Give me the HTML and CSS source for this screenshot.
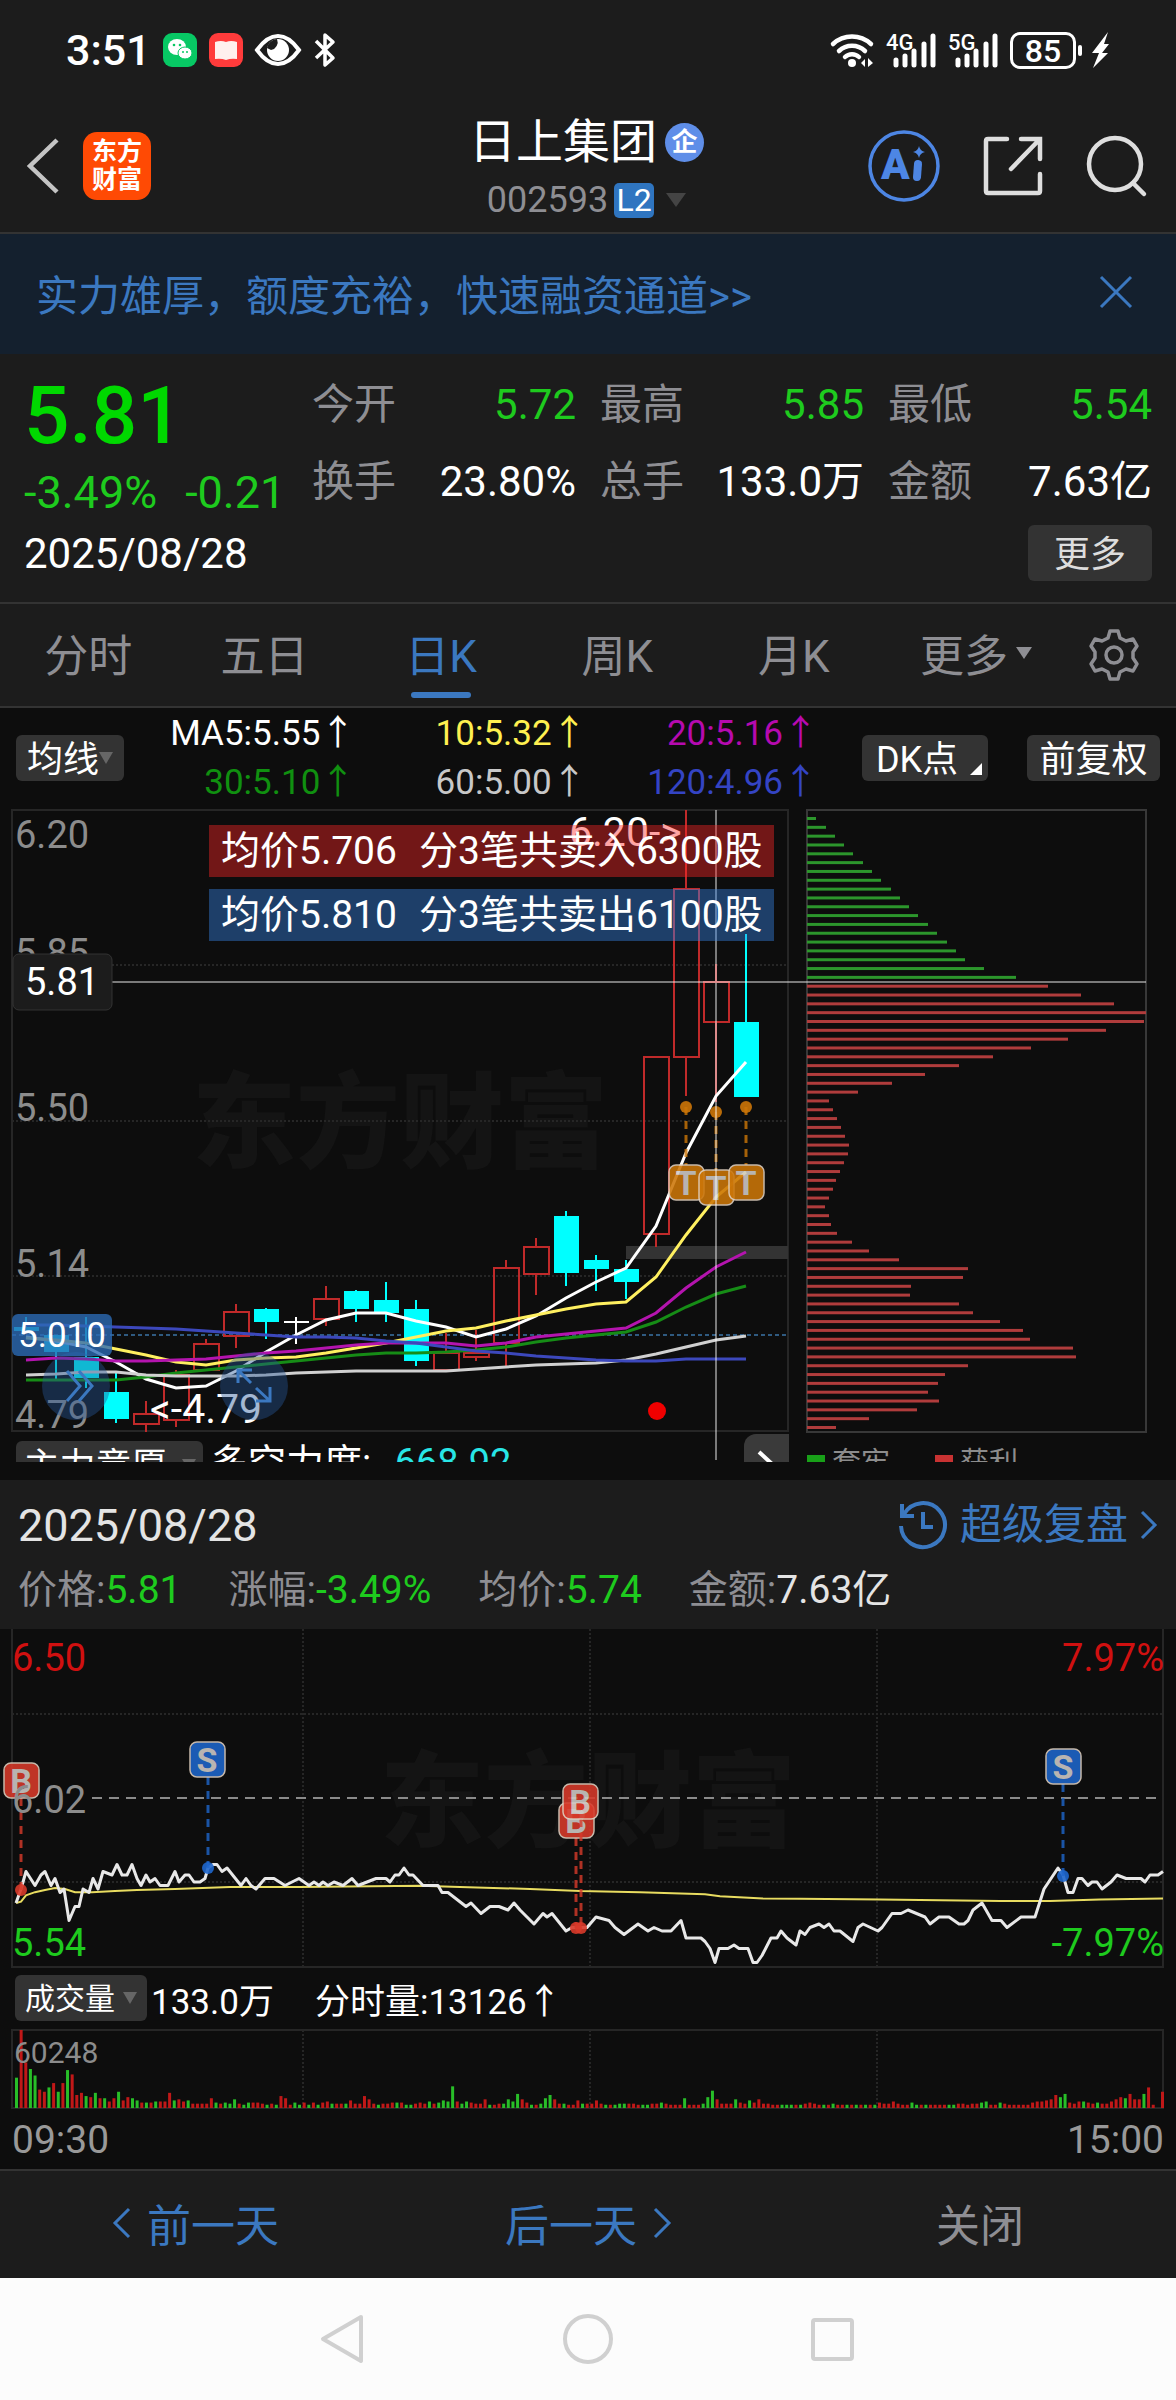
FILE: index.html
```html
<!DOCTYPE html>
<html lang="zh-CN">
<head>
  <meta charset="UTF-8" />
  <title>日上集团 002593</title>
  <meta name="viewport" content="width=device-width, initial-scale=1.0"/>
  <link rel="stylesheet" href="styles.css">
</head>
<body>

  <!-- Phone status bar -->
  <div class="status-bar">
    <div class="status-left">
      <span class="clock">3:51</span>
      <svg class="app-dot" viewBox="0 0 34 34"><rect width="34" height="34" rx="9" fill="#07c864"/><ellipse cx="14" cy="14" rx="9" ry="8" fill="#fff"/><ellipse cx="22" cy="20" rx="7" ry="6" fill="#fff" stroke="#07c864"/><g fill="#07c864"><circle cx="11" cy="12" r="1.3"/><circle cx="17" cy="12" r="1.3"/><circle cx="20" cy="19" r="1"/><circle cx="24" cy="19" r="1"/></g></svg>
      <svg class="app-dot" viewBox="0 0 34 34"><rect width="34" height="34" rx="9" fill="#ff3b3b"/><path d="M6 9q6-2 11 0q5-2 11 0v17q-6-1-11 1q-5-2-11-1z" fill="#fff0ee"/></svg>
      <svg class="eye" viewBox="0 0 46 34"><path d="M2 17Q12 3 23 3T44 17Q34 31 23 31T2 17z" fill="none" stroke="#fff" stroke-width="4"/><circle cx="23" cy="17" r="11" fill="#fff"/><path d="M22 6a8 8 0 0 1-6 11l-4-2a11 11 0 0 1 10-9z" fill="#1c1c1c"/></svg>
      <svg class="bluetooth" viewBox="0 0 24 36"><path d="M3 9l17 17-8 7V3l8 7L3 26" fill="none" stroke="#fff" stroke-width="3.5" stroke-linejoin="round"/></svg>
    </div>
    <div class="status-right">
      <svg class="wifi" viewBox="0 0 44 36"><g fill="none" stroke="#fff" stroke-width="4.5" stroke-linecap="round"><path d="M3 12a28 28 0 0 1 38 0"/><path d="M9 19a19 19 0 0 1 26 0"/><path d="M15 25a10 10 0 0 1 14 0"/></g><circle cx="22" cy="31" r="4" fill="#fff"/><path d="M31 31l4-4v8zM38 26l5 5-5 4z" fill="#fff"/></svg>
      <svg class="signal" viewBox="0 0 50 36"><text class="net" x="0" y="18">4G</text><path d="M10 33v-5M19 33v-9M28 33V19M38 33V12M47 33V4" stroke="#fff" stroke-width="5" stroke-linecap="round"/></svg>
      <svg class="signal" viewBox="0 0 50 36"><text class="net" x="0" y="18">5G</text><path d="M10 33v-5M19 33v-9M28 33V19M38 33V12M47 33V4" stroke="#fff" stroke-width="5" stroke-linecap="round"/></svg>
      <span class="battery">85</span>
      <svg class="bolt" viewBox="0 0 18 36"><path d="M16 0L0 21h7L1 36l15-15h-6l7-9h-5z" fill="#fff"/></svg>
    </div>
  </div>

  <!-- Title bar -->
  <header class="title-bar">
    <div class="title-side">
      <button class="icon-btn" aria-label="返回"><svg class="icon-back" viewBox="0 0 32 56"><path d="M30 2L3 28l27 26" fill="none" stroke="#c4c4c4" stroke-width="4.5"/></svg></button>
      <a class="brand" href="#">东方<br>财富</a>
    </div>
    <div class="title-main">
      <h1>日上集团<span class="corp">企</span></h1>
      <p>002593<span class="level">L2</span><i class="caret"></i></p>
    </div>
    <div class="title-side title-actions">
      <button class="icon-btn" aria-label="AI"><svg class="icon-ai" viewBox="0 0 72 72"><circle cx="36" cy="36" r="34" fill="none" stroke="#4d86e4" stroke-width="3.5"/><text x="13" y="49">A</text><path d="M50 34l-1 13" stroke="#4d86e4" stroke-width="8" stroke-linecap="round"/><path d="M51 16q1 5 6 6q-5 1-6 6q-1-5-6-6q5-1 6-6z" fill="#4d86e4"/></svg></button>
      <button class="icon-btn" aria-label="分享"><svg class="icon-nav" viewBox="0 0 60 60"><g fill="none" stroke="#dedede" stroke-width="4.5" stroke-linecap="round"><path d="M24 3H5q-2 0-2 2v50q0 2 2 2h50q2 0 2-2V38"/><path d="M38 3h19v20M56 4L28 33"/></g></svg></button>
      <button class="icon-btn" aria-label="搜索"><svg class="icon-nav" viewBox="0 0 60 60"><g fill="none" stroke="#dedede" stroke-width="4.5" stroke-linecap="round"><circle cx="29" cy="28" r="26"/><path d="M47 47l11 11"/></g></svg></button>
    </div>
  </header>

  <!-- Ad banner -->
  <div class="banner">
    <a href="#">实力雄厚，额度充裕，快速融资通道&gt;&gt;</a>
    <button class="icon-btn" aria-label="关闭广告"><svg class="icon-close" viewBox="0 0 32 32"><path d="M1 1l30 30M31 1L1 31" stroke="#3b78c0" stroke-width="3"/></svg></button>
  </div>

  <!-- Quote -->
  <section class="quote">
    <div class="quote-top">
      <div class="price">
        <strong>5.81</strong>
        <p><span>-3.49%</span><span>-0.21</span></p>
      </div>
      <dl class="stats">
        <div><dt>今开</dt><dd class="down">5.72</dd></div>
        <div><dt>最高</dt><dd class="down">5.85</dd></div>
        <div><dt>最低</dt><dd class="down">5.54</dd></div>
        <div><dt>换手</dt><dd>23.80%</dd></div>
        <div><dt>总手</dt><dd>133.0万</dd></div>
        <div><dt>金额</dt><dd>7.63亿</dd></div>
      </dl>
    </div>
    <div class="quote-date">
      <span>2025/08/28</span>
      <button class="chip more">更多</button>
    </div>
  </section>

  <!-- Period tabs -->
  <nav class="tabs">
    <button>分时</button>
    <button>五日</button>
    <button class="active">日K</button>
    <button>周K</button>
    <button>月K</button>
    <button class="tab-more">更多<i class="caret small"></i></button>
    <button class="gear" aria-label="设置"><svg viewBox="0 0 52 52"><g fill="none" stroke="#8e8e93" stroke-width="3.5" stroke-linejoin="round"><path d="M22 2h8l2 7 6 3 7-2 4 7-4 6v6l4 6-4 7-7-2-6 3-2 7h-8l-2-7-6-3-7 2-4-7 4-6v-6l-4-6 4-7 7 2 6-3z"/><circle cx="26" cy="26" r="8"/></g></svg></button>
  </nav>

  <!-- Daily K chart -->
  <section class="kline">
    <div class="ma-row">
      <button class="chip ma-chip">均线<i class="caret tiny"></i></button>
      <div class="ma-list">
        <span class="ma5">MA5:5.55↑</span>
        <span class="ma10">10:5.32↑</span>
        <span class="ma20">20:5.16↑</span>
        <span class="ma30">30:5.10↑</span>
        <span class="ma60">60:5.00↑</span>
        <span class="ma120">120:4.96↑</span>
      </div>
      <button class="chip dk">DK点<i class="corner"></i></button>
      <button class="chip adjust">前复权</button>
    </div>

    <svg class="chart" viewBox="0 806 1176 628">
      <text class="watermark" x="192" y="1160">东方财富</text>
      <g class="grid">
        <path d="M12 965H788M12 1121H788M12 1276H788" stroke-dasharray="2 2"/>
        <rect x="12" y="810" width="776" height="621"/>
      </g>
      <rect class="profile-frame" x="807" y="810" width="339" height="622"/>
      <rect x="626" y="1246" width="162" height="13" fill="#333"/>
      <path d="M12 1335H789" stroke="#2f5a80" stroke-width="2" stroke-dasharray="4 3"/>
      <g class="axis">
        <text x="15" y="848">6.20</text>
        <text x="15" y="966">5.85</text>
        <text x="15" y="1121">5.50</text>
        <text x="15" y="1277">5.14</text>
        <text x="15" y="1428">4.79</text>
      </g>
      <g id="candles"></g>
      <g class="note">
        <text x="569" y="846">6.20-&gt;</text>
        <text x="150" y="1423">&lt;-4.79</text>
      </g>
      <g id="profile"></g>
      <g id="maLines" class="ma-lines"></g>
      <circle cx="657" cy="1411" r="9" fill="#f00000"/>
      <g id="tMarks"></g>
      <g class="float-btn">
        <circle cx="76" cy="1386" r="34"/>
        <path d="M67 1371l13 15-13 15M79 1371l13 15-13 15"/>
        <circle cx="254" cy="1386" r="34"/>
        <path d="M252 1370h-14v13M238 1370l13 13M256 1401h14v-14M270 1401l-14-13"/>
      </g>
      <path class="cross" d="M28 982H1146M716 810V1460"/>
      <g class="deal">
        <rect x="209" y="825" width="565" height="52" fill="rgba(255,38,38,.42)"/>
        <text x="221" y="864">均价5.706</text>
        <text x="419" y="864">分3笔共卖入6300股</text>
        <rect x="209" y="889" width="565" height="52" fill="rgba(56,134,234,.42)"/>
        <text x="221" y="928">均价5.810</text>
        <text x="419" y="928">分3笔共卖出6100股</text>
      </g>
      <rect x="13" y="954" width="99" height="56" rx="6" fill="#1c1c1c" stroke="#333"/>
      <text class="tag" x="25" y="995">5.81</text>
      <rect x="12" y="1314" width="100" height="42" rx="6" fill="rgba(44,106,180,.8)"/>
      <text class="tag cost" x="18" y="1347">5.010</text>
    </svg>

    <!-- Sub indicator, cut off by the panel below -->
    <div class="sub-row">
      <button class="chip sub-chip">主力意愿<i class="caret tiny"></i></button>
      <span class="power">多空力度: <b>668.92</b></span>
      <button class="next" aria-label="下一个"><svg viewBox="0 0 24 24"><path d="M5 2l12 11L5 24" fill="none" stroke="#fff" stroke-width="4"/></svg></button>
      <span class="legend"><i class="lock"></i>套牢</span>
      <span class="legend"><i class="gain"></i>获利</span>
    </div>
  </section>

  <!-- Selected day -->
  <section class="day-info">
    <div class="day-head">
      <h2>2025/08/28</h2>
      <a href="#">
        <svg class="icon-replay" viewBox="0 0 50 50"><g fill="none" stroke="#3b78c0" stroke-width="4"><path d="M6 14a22 22 0 1 1-3 12"/><path d="M4 4v12h12M25 12v15h10"/></g></svg>
        超级复盘
        <svg class="icon-arrow" viewBox="0 0 18 30"><path d="M2 2l13 13L2 28" fill="none" stroke="#3b78c0" stroke-width="3"/></svg>
      </a>
    </div>
    <ul>
      <li>价格:<b class="down">5.81</b></li>
      <li>涨幅:<b class="down">-3.49%</b></li>
      <li>均价:<b class="down">5.74</b></li>
      <li>金额:<b>7.63亿</b></li>
    </ul>
  </section>

  <!-- Minute chart -->
  <section class="minute">
    <svg class="chart" viewBox="0 1629 1176 342">
      <text class="watermark" x="380" y="1839">东方财富</text>
      <g class="grid">
        <path d="M12 1714H1163M12 1882H1163M303 1629V1967M590 1629V1967M877 1629V1967" stroke-dasharray="2 2"/>
        <path d="M12 1629V1967H1163V1629"/>
      </g>
      <path d="M92 1798H1163" stroke="#8a8a8a" stroke-width="2" stroke-dasharray="10 7"/>
      <path id="avgLine" class="avg-line"/>
      <path id="priceLine" class="price-line"/>
      <g id="trades"></g>
      <g class="axis">
        <text class="red" x="12" y="1671">6.50</text>
        <text x="12" y="1813">6.02</text>
        <text class="green" x="12" y="1956">5.54</text>
        <text class="red end" x="1164" y="1671">7.97%</text>
        <text class="green end" x="1164" y="1956">-7.97%</text>
      </g>
    </svg>
    <div class="vol-row">
      <button class="chip vol-chip">成交量<i class="caret tiny"></i></button>
      <span>133.0万</span>
      <span class="vol-now">分时量:13126↑</span>
    </div>
    <svg class="chart" viewBox="0 2025 1176 85">
      <g class="grid">
        <path d="M303 2030V2108M590 2030V2108M877 2030V2108" stroke-dasharray="2 2"/>
        <rect x="12" y="2030" width="1151" height="78"/>
      </g>
      <g id="volume"></g>
      <text class="vol-max" x="14" y="2063">60248</text>
    </svg>
    <div class="times"><span>09:30</span><span>15:00</span></div>
  </section>

  <!-- Day switch -->
  <footer class="day-switch">
    <button><svg class="icon-arrow" viewBox="0 0 18 30"><path d="M16 1L2 15l14 14" fill="none" stroke="#3b78c0" stroke-width="3"/></svg>前一天</button>
    <button>后一天<svg class="icon-arrow" viewBox="0 0 18 30"><path d="M2 1l14 14L2 29" fill="none" stroke="#3b78c0" stroke-width="3"/></svg></button>
    <button class="close">关闭</button>
  </footer>

  <!-- System keys -->
  <div class="sys-keys">
    <button class="icon-btn" aria-label="返回"><svg viewBox="0 0 50 50"><path d="M43 3L5 25l38 22z" fill="none" stroke="#d0d0d0" stroke-width="4" stroke-linejoin="round"/></svg></button>
    <button class="icon-btn" aria-label="主页"><svg viewBox="0 0 50 50"><circle cx="25" cy="25" r="23" fill="none" stroke="#d0d0d0" stroke-width="4"/></svg></button>
    <button class="icon-btn" aria-label="最近"><svg viewBox="0 0 50 50"><rect x="5" y="6" width="39" height="39" rx="2" fill="none" stroke="#d0d0d0" stroke-width="4"/></svg></button>
  </div>

  <script src="script.js"></script>
</body>
</html>
```
FILE: styles.css
```css
* { margin: 0; padding: 0; box-sizing: border-box; }
body { font-family: Roboto, "Noto Sans CJK SC", sans-serif; background: #1c1c1c; color: #fff; }
button { background: none; border: none; color: inherit; font-family: inherit; font-size: inherit; cursor: pointer; }
a { color: #3b78c0; text-decoration: none; }
svg { display: block; flex: none; overflow: visible; }
b, h1, h2 { font-weight: 400; }
.down { color: #1ecb1e; }

.icon-btn { display: flex; }
.caret { display: inline-block; border: 10px solid transparent; border-top: 14px solid #444; border-bottom: 0; }
.caret.small { border-width: 12px 8px 0; border-top-color: #8e8e93; margin-left: 8px; }
.caret.tiny { border-width: 12px 7px 0; border-top-color: #666; margin-top: 4px; }
.chip { display: flex; align-items: center; justify-content: center; background: #333; border-radius: 6px; height: 46px; padding-bottom: 4px; font-size: 36px; }

/* status bar */
.status-bar { display: flex; justify-content: space-between; align-items: center; height: 100px; padding: 0 66px; }
.status-left, .status-right { display: flex; align-items: center; gap: 12px; }
.clock { font-size: 43px; font-weight: 500; }
.app-dot { width: 34px; height: 34px; }
.eye { width: 46px; height: 34px; }
.bluetooth { width: 24px; height: 36px; }
.wifi { width: 44px; height: 36px; }
.signal { width: 50px; height: 36px; }
.net { font-size: 22px; font-weight: 500; fill: #fff; }
.battery { position: relative; border: 3px solid #fff; border-radius: 10px; width: 66px; height: 37px; line-height: 32px; text-align: center; font-size: 32px; font-weight: 500; margin-right: 4px; }
.battery::after { content: ""; position: absolute; left: 65px; top: 10px; width: 4px; height: 11px; border-radius: 2px; background: #fff; }
.bolt { width: 18px; height: 36px; }

/* title bar */
.title-bar { display: flex; align-items: center; height: 134px; padding: 0 30px 0 27px; border-bottom: 2px solid #333; }
.title-side { flex: 1; display: flex; align-items: center; gap: 24px; }
.title-actions { justify-content: flex-end; gap: 43px; }
.icon-back { width: 32px; height: 56px; }
.brand { background: #ff4a04; color: #fff; border-radius: 14px; width: 68px; height: 68px; padding: 6px 0; text-align: center; font-size: 25px; font-weight: 700; line-height: 28px; }
.title-main { text-align: center; padding-top: 8px; }
.title-main h1 { display: flex; align-items: center; justify-content: center; gap: 8px; font-size: 47px; line-height: 60px; }
.title-main p { display: flex; align-items: center; justify-content: center; color: #8e8e93; font-size: 36px; line-height: 56px; }
.corp { background: #5f8ee8; border-radius: 50%; width: 39px; height: 39px; line-height: 38px; font-size: 26px; font-weight: 700; }
.level { background: #2f75c0; color: #fff; border-radius: 5px; width: 40px; height: 35px; line-height: 35px; font-size: 32px; margin: 0 12px 0 6px; }
.icon-ai { width: 72px; height: 72px; }
.icon-ai text { font-size: 42px; font-weight: 900; fill: #4d86e4; }
.icon-nav { width: 60px; height: 60px; }

/* banner */
.banner { display: flex; justify-content: space-between; align-items: center; height: 120px; padding: 0 44px 4px 36px; background: #14202e; font-size: 42px; }
.icon-close { width: 32px; height: 32px; }

/* quote */
.quote { padding: 13px 24px 22px; height: 250px; border-bottom: 2px solid #333; }
.quote-top { display: flex; }
.price { width: 288px; color: #00d800; }
.price strong { display: block; font-size: 80px; font-weight: 500; line-height: 98px; }
.price p { display: flex; gap: 28px; font-size: 45px; line-height: 56px; color: #1ecb1e; }
.stats { flex: 1; display: grid; grid-template-columns: repeat(3, 1fr); column-gap: 24px; font-size: 42px; line-height: 75px; }
.stats div { display: flex; justify-content: space-between; }
.stats dt { color: #8e8e93; }
.quote-date { display: flex; justify-content: space-between; align-items: center; font-size: 42px; margin-top: 4px; }
.chip.more { width: 124px; height: 56px; color: #ddd; }

/* tabs */
.tabs { display: flex; height: 104px; border-bottom: 2px solid #333; color: #8e8e93; font-size: 44px; }
.tabs button { flex: 0 0 15%; display: flex; align-items: center; justify-content: center; padding-bottom: 4px; }
.tabs .active { color: #3b78c0; position: relative; }
.tabs .active::after { content: ""; position: absolute; bottom: 8px; width: 60px; height: 6px; border-radius: 3px; background: #3b78c0; }
.tabs .tab-more { flex: 1; }
.tabs .gear { flex: 0 0 106px; padding: 0 18px 0 0; }
.gear svg { width: 52px; height: 52px; }

/* daily K */
.kline { background: #0d0d0d; height: 772px; }
.ma-row { display: flex; align-items: center; height: 98px; padding: 2px 16px 0; }
.ma-row .chip { flex: none; }
.ma-row .ma-chip { width: 108px; }
.ma-row .dk { position: relative; width: 126px; margin: 0 39px 0 44px; padding-right: 16px; }
.ma-row .adjust { width: 133px; }
.corner { position: absolute; right: 6px; bottom: 6px; border-left: 12px solid transparent; border-bottom: 12px solid #fff; }
.ma-list { flex: 1; display: grid; grid-template-columns: repeat(3, 1fr); font-size: 35px; line-height: 49px; text-align: right; }
.ma5 { color: #fff; }
.ma10 { color: #fff050; }
.ma20 { color: #b60ab0; }
.ma30 { color: #109010; }
.ma60 { color: #c8c8c8; }
.ma120 { color: #3444c4; }

.chart { width: 100%; height: auto; }
.chart text { font-size: 38px; }
.chart .watermark { font-size: 104px; font-weight: 900; fill: #141414; }
.grid { fill: none; stroke: #262626; stroke-width: 2; }
.profile-frame { fill: none; stroke: #383838; stroke-width: 2; }
.axis { fill: #8c8c8c; }
.axis .red { fill: #d01010; }
.axis .green { fill: #1ecb1e; }
.axis .end { text-anchor: end; }
.note, .tag { fill: #fff; }
.chart .note text { font-size: 41px; }
.chart .cost { font-size: 35px; }
.cross { fill: none; stroke: rgba(255, 255, 255, .45); stroke-width: 2; }
.ma-lines path { fill: none; stroke-width: 3; }
.float-btn circle { fill: rgba(38, 86, 150, .42); }
.float-btn path { fill: none; stroke: #3b78c0; stroke-width: 3; }
.deal { fill: #fff; }
.chart .deal text { font-size: 39px; }
.chart .mark { font-size: 34px; font-weight: 700; text-anchor: middle; }

.sub-row { display: flex; height: 28px; overflow: hidden; padding: 0 16px; font-size: 36px; line-height: 44px; }
.sub-chip { width: 187px; height: 44px; margin-top: 7px; padding: 0; gap: 14px; flex: none; }
.power { margin: 7px auto 0 7px; font-size: 38px; }
.power b { color: #28e6e6; margin-left: 14px; }
.next { background: #3a3a3a; border-radius: 12px 0 0 0; width: 45px; height: 44px; padding: 16px 10px; margin-right: 18px; }
.next svg { width: 24px; height: 24px; }
.legend { color: #8c8c8c; width: 128px; font-size: 29px; margin-top: 7px; }
.legend i { display: inline-block; width: 18px; height: 18px; margin-right: 7px; }
.legend:last-child { margin-right: 97px; }
.lock { background: #18a018; }
.gain { background: #c83232; }

/* selected day */
.day-info { height: 149px; padding: 11px 18px 0; }
.day-head { display: flex; justify-content: space-between; align-items: center; height: 68px; }
.day-head h2 { font-size: 45px; color: #e4e4e4; }
.day-head a { display: flex; align-items: center; gap: 12px; font-size: 42px; line-height: 56px; }
.icon-replay { width: 50px; height: 50px; }
.icon-arrow { width: 18px; height: 30px; }
.day-info ul { display: flex; gap: 47px; list-style: none; font-size: 39px; line-height: 62px; color: #8e8e93; }
.day-info b { color: #e4e4e4; }
.day-info b.down { color: #1ecb1e; }

/* minute chart */
.minute { background: #0d0d0d; height: 540px; }
.avg-line { fill: none; stroke: #e8dc60; stroke-width: 2; }
.price-line { fill: none; stroke: #e8e8e8; stroke-width: 3; stroke-linejoin: round; }
.vol-row { display: flex; align-items: center; height: 54px; padding: 0 15px; font-size: 35px; }
.vol-chip { width: 132px; height: 46px; font-size: 30px; gap: 8px; margin-right: 4px; }
.vol-now { margin-left: 41px; }
.chart .vol-max { font-size: 30px; fill: #8c8c8c; }
.times { display: flex; justify-content: space-between; padding: 2px 12px; font-size: 39px; line-height: 56px; color: #999; }

/* day switch */
.day-switch { display: flex; height: 109px; border-top: 2px solid #333; color: #3b78c0; font-size: 44px; }
.day-switch button { flex: 1; display: flex; align-items: center; justify-content: center; gap: 16px; padding-bottom: 4px; }
.day-switch .close { color: #8e8e93; }

.sys-keys { display: flex; justify-content: center; align-items: center; gap: 195px; height: 122px; background: #fcfcfc; }
.sys-keys svg { width: 50px; height: 50px; }
```
FILE: script.js
```js
const $ = (id) => document.getElementById(id);

// colour, high, body top, body bottom, low
const candles = [
  ["c", 1317, 1327, 1331, 1331], ["c", 1335, 1335, 1352, 1379], ["c", 1317, 1357, 1378, 1388],
  ["c", 1372, 1392, 1419, 1423], ["r", 1401, 1414, 1424, 1432], ["r", 1370, 1375, 1420, 1427],
  ["r", 1339, 1344, 1370, 1370], ["r", 1304, 1312, 1336, 1348], ["c", 1308, 1309, 1322, 1339],
  ["w", 1317, 1321, 1323, 1344], ["r", 1286, 1299, 1319, 1326], ["c", 1290, 1291, 1309, 1322],
  ["c", 1282, 1300, 1313, 1322], ["c", 1300, 1309, 1361, 1366], ["r", 1333, 1353, 1370, 1370],
  ["r", 1330, 1353, 1357, 1361], ["r", 1260, 1268, 1343, 1366], ["r", 1238, 1247, 1274, 1295],
  ["c", 1211, 1216, 1273, 1286], ["c", 1255, 1260, 1269, 1291], ["c", 1260, 1269, 1282, 1299],
  ["r", 1057, 1057, 1234, 1247], ["r", 810, 889, 1057, 1096], ["r", 964, 982, 1022, 1102],
  ["c", 934, 1022, 1097, 1097]
];
const colors = { c: "#00ffff", r: "#c02a2a", w: "#ffffff" };

$("candles").innerHTML = candles.map(([k, high, top, bottom, low], i) => {
  const x = 26 + i * 30;
  const paint = k === "r" ? `fill="none" stroke="${colors[k]}" stroke-width="2"` : `fill="${colors[k]}"`;
  return `<path d="M${x} ${high}V${top}M${x} ${bottom}V${low}" stroke="${colors[k]}" stroke-width="2"/>
    <rect x="${x - 12}" y="${top}" width="25" height="${bottom - top}" ${paint}/>`;
}).join("");

const maLines = {
  "#fff": [1337,1341,1347,1362,1379,1388,1386,1371,1352,1335,1320,1313,1313,1321,1327,1337,1329,1316,1298,1282,1268,1226,1153,1096,1062],
  "#fff060": [1338,1340,1343,1349,1355,1362,1365,1360,1358,1357,1353,1348,1343,1337,1331,1328,1321,1315,1309,1304,1302,1277,1235,1197,1172],
  "#b414ae": [1360,1358,1359,1361,1361,1360,1359,1356,1353,1351,1348,1345,1343,1343,1343,1346,1343,1337,1334,1331,1328,1313,1288,1267,1252],
  "#168c16": [1380,1380,1380,1380,1377,1373,1370,1367,1364,1361,1358,1355,1353,1353,1352,1350,1347,1342,1338,1335,1332,1322,1307,1294,1286],
  "#d0d0d0": [1375,1374,1372,1372,1375,1376,1376,1376,1375,1373,1372,1371,1371,1371,1371,1369,1367,1365,1364,1363,1360,1354,1347,1340,1336],
  "#3c48bc": [1325,1325,1326,1327,1328,1329,1331,1333,1335,1337,1337,1338,1341,1343,1347,1351,1353,1356,1358,1360,1361,1361,1359,1359,1359]
};
$("maLines").innerHTML = Object.entries(maLines).map(([color, ys]) =>
  `<path stroke="${color}" d="M${ys.map((y, i) => `${26 + i * 30} ${y}`).join("L")}"/>`
).join("");

// cost distribution, the first 19 are locked-in positions
const profile = [9,19,28,37,46,56,65,74,84,93,102,111,121,130,140,149,158,177,209,
  241,274,307,339,337,299,261,224,186,152,118,85,51,22,26,30,34,38,42,41,37,33,29,26,22,18,22,24,30,45,62,92,
  161,156,104,103,152,166,193,216,223,266,269,161,138,131,121,132,110,62,29];
$("profile").innerHTML = profile.map((w, i) =>
  `<rect x="807" y="${817 + i * 609 / 69}" width="${w}" height="3" fill="${i < 19 ? "#2c962c" : "#b03c3c"}"/>`
).join("");

// badge centre x, badge top, dot x, dot y, letter, colour
function mark(x, top, dotX, dotY, letter, color, below) {
  const from = below ? dotY : top + 35;
  const to = below ? top : dotY;
  return `<path d="M${dotX} ${from}V${to}" stroke="${color}" stroke-width="3" stroke-dasharray="8 6" opacity=".8"/>
    <circle cx="${dotX}" cy="${dotY}" r="6" fill="${color}" opacity=".9"/>
    <g opacity=".88"><rect x="${x - 17}" y="${top}" width="35" height="35" rx="7" fill="${color}" stroke="#e0d0c0" stroke-width="1.5"/>
    <text class="mark" x="${x}" y="${top + 30}" fill="#d0ccc8">${letter}</text></g>`;
}
$("tMarks").innerHTML =
  mark(686, 1165, 686, 1107, "T", "#cc7608", true) +
  mark(716, 1170, 716, 1112, "T", "#cc7608", true) +
  mark(746, 1165, 746, 1107, "T", "#cc7608", true);
$("trades").innerHTML =
  mark(21, 1763, 21, 1890, "B", "#d83a2a") +
  mark(207, 1742, 208, 1868, "S", "#1e66cc") +
  mark(576, 1803, 576, 1928, "B", "#d83a2a") +
  mark(580, 1784, 581, 1928, "B", "#d83a2a") +
  mark(1063, 1749, 1063, 1876, "S", "#1e66cc");

// x, cents below the previous close of 6.02
const price = `16,30 21,26 26,21 35,25 41,22 45,21 51,25 55,23 60,27 64,26 69,35 75,31 79,31 83,26 89,27 93,23 98,26
  103,21 112,22 117,19 122,22 127,22 132,19 137,23 141,25 146,22 150,24 155,23 160,25 168,25 175,21 179,24 185,22 189,22
  194,24 200,24 205,23 208,20 213,19 217,19 222,21 227,20 241,25 246,23 251,25 256,26 265,23 274,23 285,25 299,23 309,25
  314,24 319,25 323,24 328,25 334,24 343,25 352,23 358,25 367,24 376,23 386,23 390,24 395,22 399,22 404,20 409,22 413,22
  423,25 438,25 442,27 448,27 466,31 471,30 481,33 490,31 499,31 508,32 514,30 520,32 534,36 543,33 547,34 552,33 566,38
  572,37 587,37 596,34 609,35 615,37 624,39 638,36 648,38 654,37 662,38 671,38 681,35 686,40 701,40 705,41 710,43 715,47
  719,43 728,43 734,42 739,43 748,43 753,47 757,47 762,45 771,40 777,40 781,38 787,40 796,42 800,38 805,39 810,37 819,36
  824,37 829,36 834,38 840,38 853,41 858,37 863,36 878,38 882,37 892,33 901,33 908,32 925,34 930,36 939,34 949,34 959,36
  964,36 968,35 973,32 982,30 992,35 1001,35 1007,37 1021,34 1035,34 1044,26 1058,20 1063,22 1068,27 1073,27 1078,23
  1082,23 1088,25 1092,24 1097,24 1102,26 1111,24 1117,22 1126,23 1141,23 1145,24 1150,22 1158,22 1163,21`;
const average = `16,30 21,29.6 26,27.8 35,26.9 45,26.3 55,25.7 65,26 75,26.9 92,26.9 115,26.6 137,26.3 175,26 230,25.4
  300,25.4 420,25.1 460,25.4 530,26 580,26.6 640,26.9 705,27.5 720,28.1 763,28.7 800,28.8 880,29 1000,29.4 1050,29.4
  1100,29 1163,28.7`;

function toPath(points) {
  return "M" + points.split(/\s+/).map((p) => {
    const [x, cents] = p.split(",");
    return `${x} ${1798 + cents * 3.5}`;
  }).join("L");
}
$("priceLine").setAttribute("d", toPath(price));
$("avgLine").setAttribute("d", toPath(average));

// one bar a minute
const volume = `g28 r72 r42 g36 g30 r17 r15 g19 r23 g15 r23 g35 r31 r12 r14 g11 r10 g14 r9 g9 r6 r9 g15 r7 r10 g9 g7 r5 g5 r5
  g6 r6 r6 r14 g7 r8 r6 g7 r4 r4 r4 r4 r9 g5 r4 g5 g4 g8 r4 g3 g5 r5 r5 r4 g3 r4 g3 r11 r9 r3 g5 g3 r5 g3 r5 g3 r5 r6 g4 r4 r4
  g4 r7 r4 r4 r11 r8 r4 g3 r4 r4 r5 g5 r5 g3 g3 r4 r5 r4 g6 r4 g5 g7 g6 g20 r6 g4 g6 r5 r4 r4 r8 g3 r3 r4 g4 g8 g6 g13 r8 r5
  g3 r3 g4 g9 g12 r8 r4 g4 r3 r3 r7 g4 r4 r4 r7 r4 g3 r3 g3 g4 g4 r4 r4 r3 g3 g3 r4 r4 g5 r4 r3 r3 r3 g9 r3 r3 r3 g4 g10 g16
  r8 r4 r4 r4 g8 r5 r4 g7 r5 r8 r4 r4 r3 r3 g3 g3 g3 r3 g3 r4 r5 r4 r3 g3 r3 g4 r3 r3 g3 r3 g3 r3 g3 r3 g3 r5 r4 r4 r6 r4 r3
  r3 g5 g3 r3 g3 r3 r3 r3 r3 g3 g3 r4 r4 r3 r4 r4 g5 g6 r3 r3 g5 r4 r3 r3 r3 r3 r3 r5 r6 r6 r7 r8 r12 g10 g13 r5 r4 r6 g6 r5
  r4 g5 r4 r4 r6 r8 r10 g9 r13 r8 r8 g13 r19 r3 r0 r15`.split(/\s+/);
$("volume").innerHTML = volume.map((v, i) => {
  const h = v.slice(1) * 78 / 72;
  return `<rect x="${15 + i * 1146 / (volume.length - 1)}" y="${2108 - h}" width="3" height="${h}" fill="${v[0] === "g" ? "#28be28" : "#c01818"}"/>`;
}).join("");
```
